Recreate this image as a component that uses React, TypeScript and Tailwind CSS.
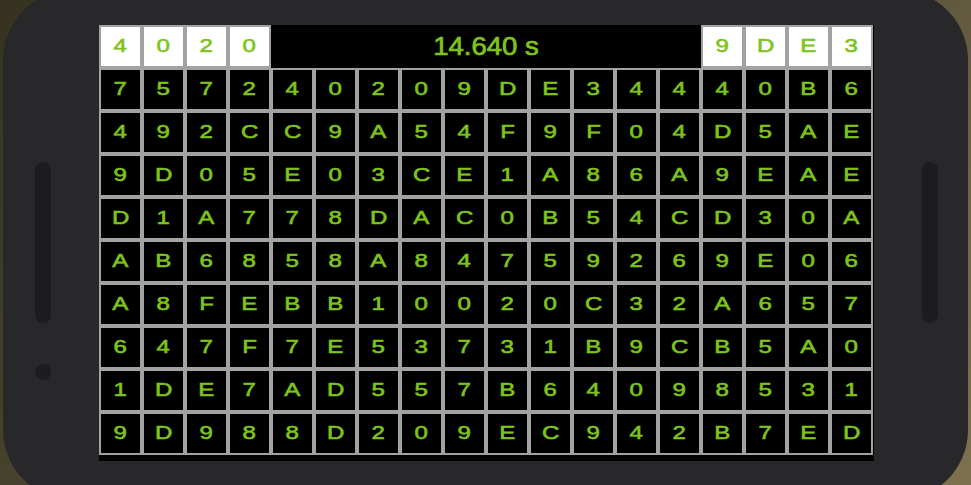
import React from 'react';

// header row: 4 left cells, merged timer cell, 4 right cells
const HEAD_LEFT = ['4', '0', '2', '0'];
const HEAD_RIGHT = ['9', 'D', 'E', '3'];

const ROWS = [
  '757240209DE34440B6',
  '492CC9A54F9F04D5AE',
  '9D05E03CE1A86A9EAE',
  'D1A778DAC0B54CD30A',
  'AB6858A84759269E06',
  'A8FEBB10020C32A657',
  '647F7E53731B9CB5A0',
  '1DE7AD557B64098531',
  '9D988D209EC942B7ED',
];

const cellText =
  'inline-block scale-x-[1.3] text-[18.5px] leading-none text-[#7ec41c] [-webkit-text-stroke:0.6px_#7ec41c]';

function Cell({ ch, white }: { ch: string; white?: boolean }) {
  return (
    <div
      className={`box-border h-[43px] w-[43px] border-2 border-[#a2a2a2] flex items-center justify-center ${
        white ? 'bg-white' : 'bg-black'
      }`}
    >
      <span className={cellText}>{ch}</span>
    </div>
  );
}

export default function App() {
  return (
    <div
      className="h-[485px] w-[971px] overflow-hidden bg-[linear-gradient(135deg,#35331f_0%,#4d4731_45%,#6f6548_80%,#7d7150_100%)]"
      style={{ fontFamily: '"Liberation Sans", Arial, sans-serif' }}
    >
      {/* phone body */}
      <div className="relative ml-[3px] mt-[-10px] h-[510px] w-[965px] rounded-[70px] bg-[#28282a] pl-[96px] pt-[35px]">
        <div className="absolute left-[32px] top-[172px] h-[161px] w-[16px] rounded-full bg-[#1c1c1e]" />
        <div className="absolute left-[919px] top-[172px] h-[161px] w-[16px] rounded-full bg-[#1c1c1e]" />
        <div className="absolute left-[32px] top-[374px] h-[16px] w-[16px] rounded-full bg-[#1c1c1e]" />

        {/* screen */}
        <div className="h-[436px] w-[775px] bg-black">
          <div className="grid grid-cols-[repeat(18,43px)] grid-rows-[repeat(10,43px)]">
            {HEAD_LEFT.map((c, i) => (
              <Cell key={`hl${i}`} ch={c} white />
            ))}
            <div className="col-span-10 flex items-center justify-center bg-black">
              <span className="inline-block scale-x-[1.1] text-[25px] leading-none text-[#7ec41c] [-webkit-text-stroke:0.7px_#7ec41c]">
                14.640 s
              </span>
            </div>
            {HEAD_RIGHT.map((c, i) => (
              <Cell key={`hr${i}`} ch={c} white />
            ))}
            {ROWS.map((row, r) =>
              row.split('').map((c, i) => <Cell key={`${r}-${i}`} ch={c} />)
            )}
          </div>
        </div>
      </div>
    </div>
  );
}
